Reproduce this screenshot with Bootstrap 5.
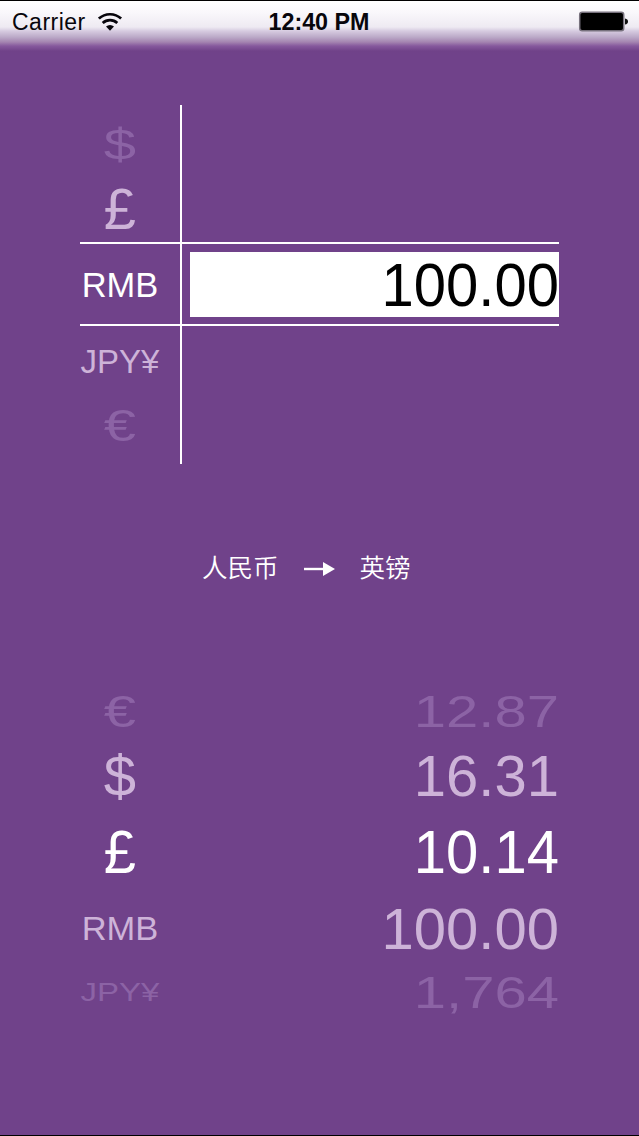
<!DOCTYPE html>
<html lang="zh-CN">
<head>
<meta charset="utf-8">
<meta name="viewport" content="width=device-width, initial-scale=1">
<title>Currency converter</title>
<link href="https://cdn.jsdelivr.net/npm/bootstrap@5.3.0/dist/css/bootstrap.min.css" rel="stylesheet">
<style>
body{background:#70428a;font-family:"Liberation Sans","Noto Sans CJK SC",sans-serif;color:#fff;line-height:1}
.screen{height:1136px;border-top:1px solid #000;border-bottom:1px solid #000;overflow:hidden}
.status{height:104px;background:linear-gradient(#fff 0,#f9f7fb 12px,#eeeaf2 26px,#d6cbe0 30px,#bbaac8 36px,#a585b1 41px,#86599d 45px,#704289 50px,#70428a 54px)}
.status-row{height:41px;color:#08060c;font-size:23px;padding-left:12px;padding-right:11px}
.status-row .carrier{width:86px;letter-spacing:.5px;padding-top:2px}
.clock{left:268px;top:1px;height:41px;width:102px;font-size:23.3px;font-weight:700;color:#08060c}
.picker{width:479px;margin-left:80px}
.source{height:359px}
.slots{display:grid;grid-template-rows:57px 71px 82px 71px 57px;padding-top:11px}
.unit{width:80px}
.slots>div{display:flex;align-items:center;white-space:nowrap}
.slots>.unit{justify-content:center}
.slots>.amount{justify-content:flex-end}
.slots span{display:block;font-size:58px;transform:scaleY(1.04)}
.slots .code{font-size:34.5px}
.slots .yen{font-size:33px}
.slots .near span{color:#cdb3d8;transform:scaleY(.98)}
.slots .far span{color:#8c63a5;transform:scaleY(.76)}
.slots .near .yen{transform:scaleY(1.01)}
.rule-v{left:100px;top:0;width:2px;height:359px;background:#fff}
.band{left:0;top:137px;width:479px;height:84px;border-top:2px solid #fff;border-bottom:2px solid #fff}
.entry{width:369px;height:65px;color:#000;font-size:58px;padding-top:2px}
.entry span{transform:scaleY(1.04)}
.direction{height:208px;padding:2px 0 0 202px;font-size:25.5px;font-weight:350}
</style>
</head>
<body>
<main class="screen">
<header class="status position-relative">
<div class="status-row d-flex align-items-center">
<span class="carrier">Carrier</span>
<svg width="26" height="20" viewBox="0 0 26 20" fill="none" stroke="#08060c" stroke-width="2.7"><path d="M.9 6.6a16.3 16.3 0 0 1 22.2 0M4.7 11a10.6 10.6 0 0 1 14.6 0"/><path d="M8 14.6a6 6 0 0 1 8 0l-4 4.2z" fill="#08060c" stroke="none"/></svg>
<svg class="ms-auto" width="50" height="22" viewBox="0 0 50 22"><rect x="1.7" y="1.2" width="44" height="18.6" rx="2.5" fill="#000" stroke="#77717d" stroke-width="1.5"/><path d="M47 7.5q3 .5 3 3t-3 3z" fill="#111"/></svg>
</div>
<div class="clock position-absolute d-flex align-items-center justify-content-center text-nowrap">12:40 PM</div>
</header>
<section class="picker source position-relative">
<div class="slots unit">
<div class="unit far"><span>$</span></div>
<div class="unit near"><span>£</span></div>
<div class="unit"><span class="code">RMB</span></div>
<div class="unit near"><span class="code yen">JPY¥</span></div>
<div class="unit far"><span>€</span></div>
</div>
<div class="rule-v position-absolute"></div>
<div class="band position-absolute d-flex align-items-center justify-content-end">
<div class="entry bg-white d-flex align-items-center justify-content-end"><span>100.00</span></div>
</div>
</section>
<section class="direction d-flex align-items-center">
<span>人民币</span>
<svg class="mx-4" width="33" height="16" viewBox="0 0 33 16"><path d="M1 8h21" stroke="#fff" stroke-width="2.4"/><path d="M20 1v14l12-7z" fill="#fff"/></svg>
<span>英镑</span>
</section>
<section class="picker d-flex justify-content-between">
<div class="slots unit">
<div class="unit far"><span>€</span></div>
<div class="unit near"><span>$</span></div>
<div class="unit"><span>£</span></div>
<div class="unit near"><span class="code">RMB</span></div>
<div class="unit far"><span class="code yen">JPY¥</span></div>
</div>
<div class="slots">
<div class="amount far"><span>12.87</span></div>
<div class="amount near"><span>16.31</span></div>
<div class="amount"><span>10.14</span></div>
<div class="amount near"><span>100.00</span></div>
<div class="amount far"><span>1,764</span></div>
</div>
</section>
</main>
<script src="https://cdn.jsdelivr.net/npm/bootstrap@5.3.0/dist/js/bootstrap.bundle.min.js"></script>
</body>
</html>
